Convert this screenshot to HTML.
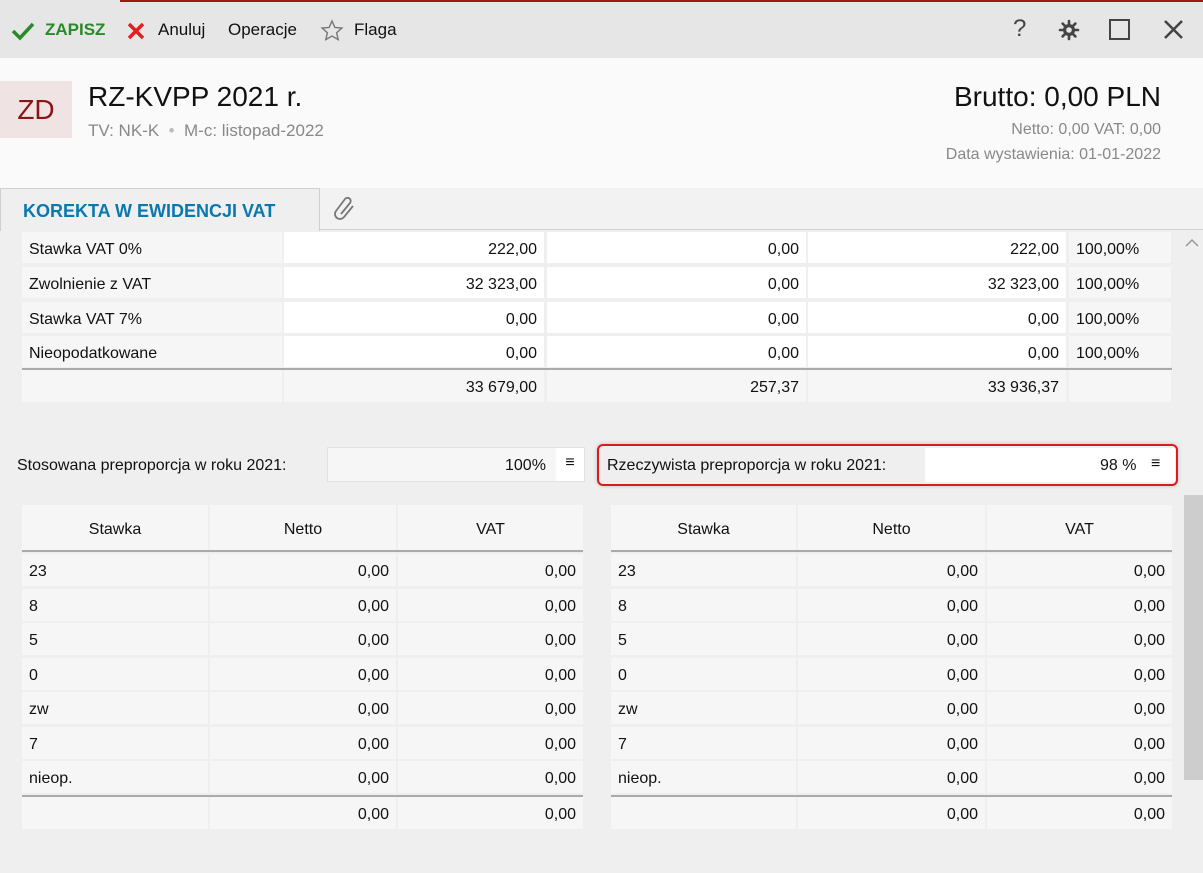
<!DOCTYPE html>
<html><head><meta charset="utf-8"><style>
*{box-sizing:border-box;margin:0;padding:0}
body{width:1203px;height:873px;overflow:hidden;background:#efefef;font-family:"Segoe UI","Liberation Sans",sans-serif;font-size:16px;color:#111;position:relative}
.a{position:absolute}
.c{position:absolute;display:flex;align-items:center;padding:4px 7px 0;white-space:nowrap}
.r{justify-content:flex-end}
.m{justify-content:center}
.w{background:#fff}.g{background:#f6f6f6}
</style></head><body>
<div class="a" style="left:0;top:0;width:1203px;height:58px;background:#e6e6e6"></div>
<div class="a" style="left:120px;top:0;width:1083px;height:2px;background:#9a1a1a"></div>
<svg class="a" style="left:11px;top:21px" width="24" height="20" viewBox="0 0 24 20"><path d="M2 10l7 7L22 3" stroke="#2a8a2a" stroke-width="3.5" fill="none"/></svg>
<div class="a" style="left:45px;top:20px;color:#2a8a2a;font-weight:bold;font-size:17px">ZAPISZ</div>
<svg class="a" style="left:126px;top:21px" width="20" height="20"><path d="M3 3L17 17M17 3L3 17" stroke="#e02020" stroke-width="3.5"/></svg>
<div class="a" style="left:158px;top:20px;font-size:17px">Anuluj</div>
<div class="a" style="left:228px;top:20px;font-size:17px">Operacje</div>
<svg class="a" style="left:320px;top:19px" width="24" height="22" viewBox="0 0 24 22"><path d="M12 2l2.9 6.5 7 .6-5.3 4.6 1.6 6.9L12 17l-6.2 3.6 1.6-6.9L2.1 9.1l7-.6z" fill="none" stroke="#777" stroke-width="1.4"/></svg>
<div class="a" style="left:354px;top:20px;font-size:17px">Flaga</div>
<div class="a" style="left:1013px;top:15px;font-size:24px;color:#444">?</div>
<svg class="a" style="left:1058px;top:19px" width="22" height="22" viewBox="0 0 22 22"><g stroke="#444" stroke-width="2.6" stroke-linecap="round"><path d="M11 2v18M2 11h18M4.6 4.6l12.8 12.8M17.4 4.6L4.6 17.4"/></g><circle cx="11" cy="11" r="6" fill="#444"/><circle cx="11" cy="11" r="2.8" fill="#e6e6e6"/></svg>
<div class="a" style="left:1109px;top:19px;width:21px;height:21px;border:2.5px solid #444"></div>
<svg class="a" style="left:1163px;top:19px" width="21" height="21"><path d="M2 2L19 19M19 2L2 19" stroke="#444" stroke-width="2.5"/></svg>

<div class="a" style="left:0;top:58px;width:1203px;height:130px;background:#fafafa"></div>
<div class="a" style="left:0;top:81px;width:72px;height:57px;background:#efe3e3;color:#8b1414;font-size:28px;display:flex;align-items:center;justify-content:center">ZD</div>
<div class="a" style="left:88px;top:81px;font-size:28px">RZ-KVPP 2021 r.</div>
<div class="a" style="left:88px;top:121px;font-size:17px;color:#888">TV: NK-K &nbsp;<span style="color:#bbb">•</span>&nbsp; M-c: listopad-2022</div>
<div class="a" style="right:42px;top:81px;font-size:28px">Brutto: 0,00 PLN</div>
<div class="a" style="right:42px;top:121px;font-size:16px;color:#888">Netto: 0,00 VAT: 0,00</div>
<div class="a" style="right:42px;top:146px;font-size:16px;color:#888">Data wystawienia: 01-01-2022</div>

<div class="a" style="left:0;top:188px;width:1203px;height:42px;background:#f2f2f2;border-bottom:1px solid #d0d0d0"></div>
<div class="a" style="left:0;top:188px;width:320px;height:43px;background:#efefef;border:1px solid #d0d0d0;border-bottom:none;color:#0a78b0;font-weight:bold;font-size:18px;padding:12px 0 0 22px">KOREKTA W EWIDENCJI VAT</div>
<svg class="a" style="left:332px;top:194px" width="26" height="28" viewBox="0 0 26 28"><path d="M9 20l9-11a3 3 0 0 0-5-4L4 17a5 5 0 0 0 8 6l9-11" fill="none" stroke="#777" stroke-width="1.8"/></svg>

<div class="a" style="left:1183px;top:232px;width:20px;height:641px;background:#efefef"></div>
<svg class="a" style="left:1184px;top:238px" width="16" height="10"><path d="M2 8l6-6 6 6" stroke="#999" stroke-width="1.5" fill="none"/></svg>
<div class="a" style="left:1184px;top:495px;width:19px;height:285px;background:#cdcdcd"></div>

<div id="top"></div>
<div class="a" style="left:22px;top:368px;width:1150px;height:2px;background:#aaa"></div>

<div class="a" style="left:17px;top:457px">Stosowana preproporcja w roku 2021:</div>
<div class="a g" style="left:327px;top:447px;width:258px;height:35px;border:1px solid #e2e2e2"></div>
<div class="a" style="left:505px;top:457px">100%</div>
<div class="a w" style="left:556px;top:448px;width:28px;height:33px;text-align:center;padding-top:6px">≡</div>

<div class="a" style="left:597px;top:444px;width:581px;height:42px;border:2px solid #e01818;border-radius:6px;box-shadow:0 0 4px rgba(0,0,0,.2)"></div>
<div class="a" style="left:607px;top:457px">Rzeczywista preproporcja w roku 2021:</div>
<div class="a w" style="left:925px;top:448px;width:250px;height:34px"></div>
<div class="a" style="left:1100px;top:457px">98 %</div>
<div class="a" style="left:1151px;top:455px">≡</div>

<div id="bt"></div>
<script>
var h='';
function cell(x,y,w,hh,cls,t,al){h+='<div class="c '+cls+' '+(al||'')+'" style="left:'+x+'px;top:'+y+'px;width:'+w+'px;height:'+hh+'px">'+t+'</div>';}
var rows=[["Stawka VAT 0%","222,00","0,00","222,00","100,00%"],["Zwolnienie z VAT","32 323,00","0,00","32 323,00","100,00%"],["Stawka VAT 7%","0,00","0,00","0,00","100,00%"],["Nieopodatkowane","0,00","0,00","0,00","100,00%"],["","33 679,00","257,37","33 936,37",""]];
var ys=[232,267,302,336,370];
var cx=[[22,260],[284,260],[547,259],[808,258],[1069,102]];
rows.forEach(function(r,i){var tot=i==4;r.forEach(function(t,j){cell(cx[j][0],ys[i],cx[j][1],tot?32:31,(tot||j==0||j==4)?'g':'w',t,(j>0&&j<4)?'r':'');});});
var bl=["23","8","5","0","zw","7","nieop.",""];
[[22,[186,186,185]],[611,[185,187,185]]].forEach(function(T){
 var x0=T[0],ws=T[1],xs=[x0,x0+ws[0]+2,x0+ws[0]+ws[1]+4];
 ["Stawka","Netto","VAT"].forEach(function(t,j){cell(xs[j],505,ws[j],46,'g',t,'m');});
 h+='<div class="a" style="left:'+x0+'px;top:550px;width:'+(ws[0]+ws[1]+ws[2]+4)+'px;height:2px;background:#aaa"></div>';
 bl.forEach(function(s,i){var y=i<7?554+i*34.5:797;var hh=32;
  cell(xs[0],y,ws[0],hh,'g',s);cell(xs[1],y,ws[1],hh,'g','0,00','r');cell(xs[2],y,ws[2],hh,'g','0,00','r');});
 h+='<div class="a" style="left:'+x0+'px;top:795px;width:'+(ws[0]+ws[1]+ws[2]+4)+'px;height:2px;background:#aaa"></div>';
});
document.getElementById('top').outerHTML=h;
</script>
</body></html>
